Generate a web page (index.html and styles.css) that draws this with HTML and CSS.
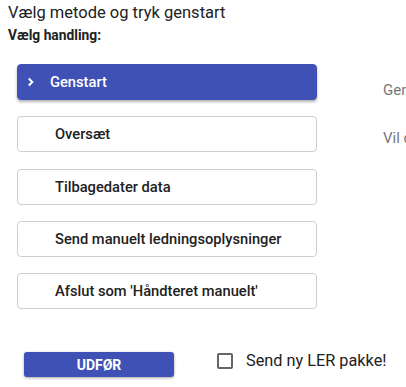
FILE: index.html
```html
<!DOCTYPE html>
<html lang="da">
<head>
    <meta charset="UTF-8">
    <title>Vælg handling</title>
    <link rel="stylesheet" href="styles.css">
</head>
<body>
    <div class="title">Vælg metode og tryk genstart</div>
    <div class="subtitle">Vælg handling:</div>

    <div class="content">
        <div class="actions">
            <div class="action selected">
                <svg class="chevron" width="8" height="10" viewBox="0 0 8 10"><path d="M1.8 1.5 L5.3 5 L1.8 8.5" fill="none" stroke="#fff" stroke-width="2"/></svg>
                <span>Genstart</span>
            </div>
            <div class="action"><span>Oversæt</span></div>
            <div class="action"><span>Tilbagedater data</span></div>
            <div class="action"><span>Send manuelt ledningsoplysninger</span></div>
            <div class="action"><span>Afslut som 'Håndteret manuelt'</span></div>
        </div>
        <div class="details">
            <p>Genstart behandlingen af sagen</p>
            <p>Vil du genstarte sagen?</p>
        </div>
    </div>

    <div class="footer">
        <button class="run-btn">UDFØR</button>
        <label class="check">
            <span class="box"></span>
            Send ny LER pakke!
        </label>
    </div>
</body>
</html>
```

FILE: styles.css
```css
* {
    box-sizing: border-box;
    font-family: Roboto, 'Liberation Sans', sans-serif;
}

body {
    margin: 0;
    padding: 3px 8px 0;
    color: #212121;
    background: #fff;
    width: 406px;
    height: 387px;
    overflow: hidden;
}

.title {
    font-size: 16.5px;
    line-height: 20px;
}

.subtitle {
    font-size: 13.8px;
    font-weight: 700;
    line-height: 18px;
    margin-top: 3px;
}

.content {
    display: flex;
    margin-top: 20px;
}

.actions {
    width: 300px;
    flex-shrink: 0;
    margin-left: 9px;
    display: flex;
    flex-direction: column;
    gap: 16.3px;
}

.action {
    height: 36px;
    border: 1px solid #cfcfcf;
    border-radius: 4px;
    display: flex;
    align-items: center;
    padding-left: 37px;
    font-size: 14.7px;
    font-weight: 500;
    color: #212121;
}

.action.selected {
    background-color: #3f51b5;
    border-color: #3f51b5;
    color: #fff;
    padding-left: 9px;
    box-shadow: 0 2px 3px rgba(0, 0, 0, 0.3);
}

.chevron {
    margin-right: 15px;
}

.details {
    margin-left: 66px;
    white-space: nowrap;
    color: #777;
    font-size: 15px;
}

.details p {
    margin: 17px 0 30px;
}

.footer {
    display: flex;
    align-items: center;
    margin-top: 43px;
    margin-left: 16px;
}

.run-btn {
    width: 150px;
    height: 25px;
    border: none;
    border-radius: 3px;
    background-color: #3f51b5;
    color: #fff;
    font-size: 14px;
    font-weight: 700;
    box-shadow: 0 1px 3px rgba(0, 0, 0, 0.35);
}

.check {
    display: flex;
    align-items: center;
    margin-left: 43px;
    margin-top: -8px;
    font-size: 16.3px;
    color: #212121;
}

.box {
    width: 16px;
    height: 16px;
    border: 2px solid #666;
    border-radius: 2px;
    margin-right: 13px;
}
```
